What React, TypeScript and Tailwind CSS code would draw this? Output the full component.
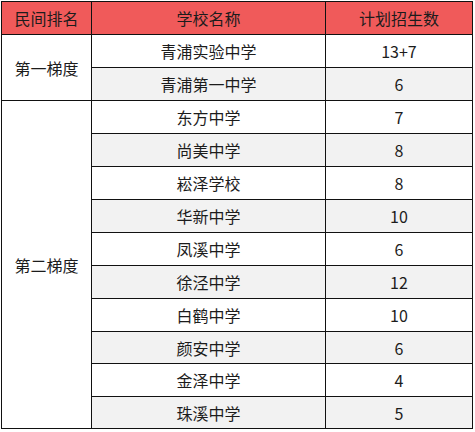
import React from "react";

const rows: { name: string; num: string }[] = [
  { name: "青浦实验中学", num: "13+7" },
  { name: "青浦第一中学", num: "6" },
  { name: "东方中学", num: "7" },
  { name: "尚美中学", num: "8" },
  { name: "崧泽学校", num: "8" },
  { name: "华新中学", num: "10" },
  { name: "凤溪中学", num: "6" },
  { name: "徐泾中学", num: "12" },
  { name: "白鹤中学", num: "10" },
  { name: "颜安中学", num: "6" },
  { name: "金泽中学", num: "4" },
  { name: "珠溪中学", num: "5" },
];

const cell = "flex items-center justify-center border-r border-b border-[#111]";

export default function App() {
  return (
    <div className="w-[475px] h-[432px] bg-white pl-px pt-px text-[16px] text-[#1c1c1c] [font-family:'Noto_Sans_CJK_SC','Noto_Sans',sans-serif]">
      <div className="grid w-fit grid-cols-[90px_234px_147px] grid-rows-[33px_33px_33px_33px_33px_33px_33px_33px_33px_33px_32px_33px_32px] border-l border-t border-[#111]">
        <div className={`${cell} bg-[#f05a5a]`}>民间排名</div>
        <div className={`${cell} bg-[#f05a5a]`}>学校名称</div>
        <div className={`${cell} bg-[#f05a5a]`}>计划招生数</div>

        <div className={`${cell} row-span-2 bg-white`}>第一梯度</div>
        {rows.slice(0, 2).map((r, i) => (
          <React.Fragment key={r.name}>
            <div className={`${cell} ${i % 2 === 1 ? "bg-[#f2f2f2]" : "bg-white"}`}>{r.name}</div>
            <div className={`${cell} ${i % 2 === 1 ? "bg-[#f2f2f2]" : "bg-white"}`}>{r.num}</div>
          </React.Fragment>
        ))}
        <div className={`${cell} row-span-10 bg-white`}>第二梯度</div>
        {rows.slice(2).map((r, i) => (
          <React.Fragment key={r.name}>
            <div className={`${cell} ${i % 2 === 1 ? "bg-[#f2f2f2]" : "bg-white"}`}>{r.name}</div>
            <div className={`${cell} ${i % 2 === 1 ? "bg-[#f2f2f2]" : "bg-white"}`}>{r.num}</div>
          </React.Fragment>
        ))}
      </div>
    </div>
  );
}
